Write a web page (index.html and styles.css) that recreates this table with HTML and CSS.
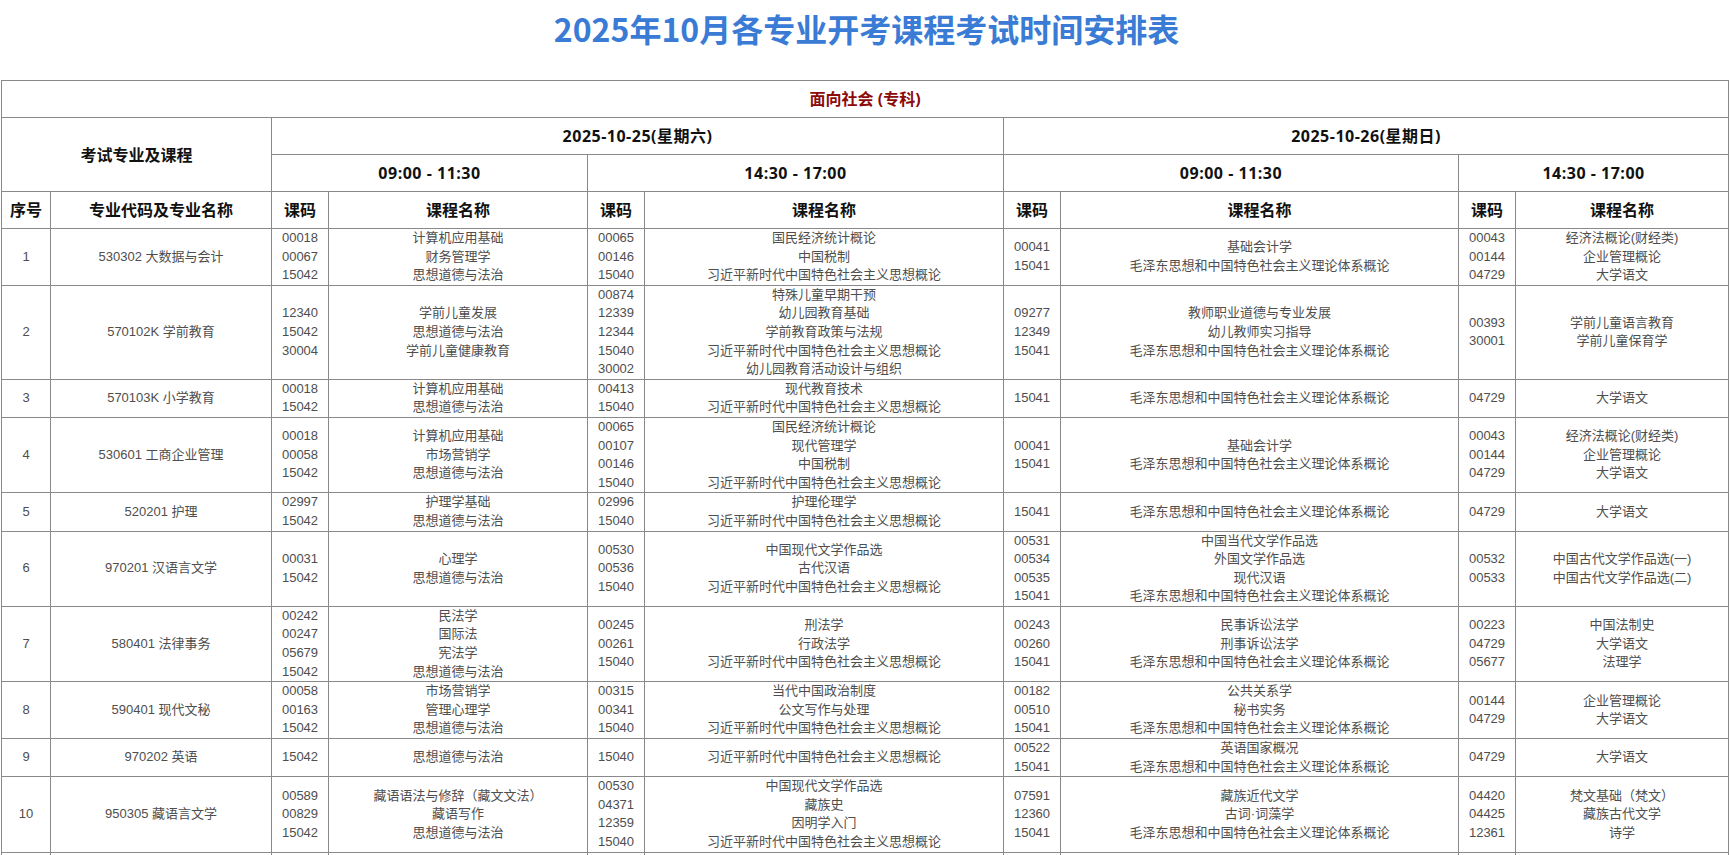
FILE: index.html
```html
<!DOCTYPE html>
<html lang="zh-CN">
<head>
<meta charset="utf-8">
<title>2025年10月各专业开考课程考试时间安排表</title>
<link rel="stylesheet" href="styles.css">
</head>
<body>
<h1 class="title">2025年10月各专业开考课程考试时间安排表</h1>
<table class="schedule">
  <colgroup>
    <col class="c-no"><col class="c-major">
    <col class="c-code"><col class="c-n1">
    <col class="c-code"><col class="c-n2">
    <col class="c-code"><col class="c-n3">
    <col class="c-code"><col class="c-n4">
  </colgroup>
  <thead>
    <tr><th colspan="10" class="section">面向社会 (专科)</th></tr>
    <tr>
      <th colspan="2" rowspan="2">考试专业及课程</th>
      <th colspan="4" class="latin">2025-10-25(星期六)</th>
      <th colspan="4" class="latin">2025-10-26(星期日)</th>
    </tr>
    <tr>
      <th colspan="2" class="latin">09:00 - 11:30</th>
      <th colspan="2" class="latin">14:30 - 17:00</th>
      <th colspan="2" class="latin">09:00 - 11:30</th>
      <th colspan="2" class="latin">14:30 - 17:00</th>
    </tr>
    <tr class="colhead">
      <th>序号</th><th>专业代码及专业名称</th>
      <th>课码</th><th>课程名称</th>
      <th>课码</th><th>课程名称</th>
      <th>课码</th><th>课程名称</th>
      <th>课码</th><th>课程名称</th>
    </tr>
  </thead>
  <tbody>
    <tr>
      <td>1</td><td>530302 大数据与会计</td>
      <td>00018<br>00067<br>15042</td><td>计算机应用基础<br>财务管理学<br>思想道德与法治</td>
      <td>00065<br>00146<br>15040</td><td>国民经济统计概论<br>中国税制<br>习近平新时代中国特色社会主义思想概论</td>
      <td>00041<br>15041</td><td>基础会计学<br>毛泽东思想和中国特色社会主义理论体系概论</td>
      <td>00043<br>00144<br>04729</td><td>经济法概论(财经类)<br>企业管理概论<br>大学语文</td>
    </tr>
    <tr>
      <td>2</td><td>570102K 学前教育</td>
      <td>12340<br>15042<br>30004</td><td>学前儿童发展<br>思想道德与法治<br>学前儿童健康教育</td>
      <td>00874<br>12339<br>12344<br>15040<br>30002</td><td>特殊儿童早期干预<br>幼儿园教育基础<br>学前教育政策与法规<br>习近平新时代中国特色社会主义思想概论<br>幼儿园教育活动设计与组织</td>
      <td>09277<br>12349<br>15041</td><td>教师职业道德与专业发展<br>幼儿教师实习指导<br>毛泽东思想和中国特色社会主义理论体系概论</td>
      <td>00393<br>30001</td><td>学前儿童语言教育<br>学前儿童保育学</td>
    </tr>
    <tr>
      <td>3</td><td>570103K 小学教育</td>
      <td>00018<br>15042</td><td>计算机应用基础<br>思想道德与法治</td>
      <td>00413<br>15040</td><td>现代教育技术<br>习近平新时代中国特色社会主义思想概论</td>
      <td>15041</td><td>毛泽东思想和中国特色社会主义理论体系概论</td>
      <td>04729</td><td>大学语文</td>
    </tr>
    <tr>
      <td>4</td><td>530601 工商企业管理</td>
      <td>00018<br>00058<br>15042</td><td>计算机应用基础<br>市场营销学<br>思想道德与法治</td>
      <td>00065<br>00107<br>00146<br>15040</td><td>国民经济统计概论<br>现代管理学<br>中国税制<br>习近平新时代中国特色社会主义思想概论</td>
      <td>00041<br>15041</td><td>基础会计学<br>毛泽东思想和中国特色社会主义理论体系概论</td>
      <td>00043<br>00144<br>04729</td><td>经济法概论(财经类)<br>企业管理概论<br>大学语文</td>
    </tr>
    <tr>
      <td>5</td><td>520201 护理</td>
      <td>02997<br>15042</td><td>护理学基础<br>思想道德与法治</td>
      <td>02996<br>15040</td><td>护理伦理学<br>习近平新时代中国特色社会主义思想概论</td>
      <td>15041</td><td>毛泽东思想和中国特色社会主义理论体系概论</td>
      <td>04729</td><td>大学语文</td>
    </tr>
    <tr>
      <td>6</td><td>970201 汉语言文学</td>
      <td>00031<br>15042</td><td>心理学<br>思想道德与法治</td>
      <td>00530<br>00536<br>15040</td><td>中国现代文学作品选<br>古代汉语<br>习近平新时代中国特色社会主义思想概论</td>
      <td>00531<br>00534<br>00535<br>15041</td><td>中国当代文学作品选<br>外国文学作品选<br>现代汉语<br>毛泽东思想和中国特色社会主义理论体系概论</td>
      <td>00532<br>00533</td><td>中国古代文学作品选(一)<br>中国古代文学作品选(二)</td>
    </tr>
    <tr>
      <td>7</td><td>580401 法律事务</td>
      <td>00242<br>00247<br>05679<br>15042</td><td>民法学<br>国际法<br>宪法学<br>思想道德与法治</td>
      <td>00245<br>00261<br>15040</td><td>刑法学<br>行政法学<br>习近平新时代中国特色社会主义思想概论</td>
      <td>00243<br>00260<br>15041</td><td>民事诉讼法学<br>刑事诉讼法学<br>毛泽东思想和中国特色社会主义理论体系概论</td>
      <td>00223<br>04729<br>05677</td><td>中国法制史<br>大学语文<br>法理学</td>
    </tr>
    <tr>
      <td>8</td><td>590401 现代文秘</td>
      <td>00058<br>00163<br>15042</td><td>市场营销学<br>管理心理学<br>思想道德与法治</td>
      <td>00315<br>00341<br>15040</td><td>当代中国政治制度<br>公文写作与处理<br>习近平新时代中国特色社会主义思想概论</td>
      <td>00182<br>00510<br>15041</td><td>公共关系学<br>秘书实务<br>毛泽东思想和中国特色社会主义理论体系概论</td>
      <td>00144<br>04729</td><td>企业管理概论<br>大学语文</td>
    </tr>
    <tr>
      <td>9</td><td>970202 英语</td>
      <td>15042</td><td>思想道德与法治</td>
      <td>15040</td><td>习近平新时代中国特色社会主义思想概论</td>
      <td>00522<br>15041</td><td>英语国家概况<br>毛泽东思想和中国特色社会主义理论体系概论</td>
      <td>04729</td><td>大学语文</td>
    </tr>
    <tr>
      <td>10</td><td>950305 藏语言文学</td>
      <td>00589<br>00829<br>15042</td><td>藏语语法与修辞（藏文文法）<br>藏语写作<br>思想道德与法治</td>
      <td>00530<br>04371<br>12359<br>15040</td><td>中国现代文学作品选<br>藏族史<br>因明学入门<br>习近平新时代中国特色社会主义思想概论</td>
      <td>07591<br>12360<br>15041</td><td>藏族近代文学<br>古词·词藻学<br>毛泽东思想和中国特色社会主义理论体系概论</td>
      <td>04420<br>04425<br>12361</td><td>梵文基础（梵文）<br>藏族古代文学<br>诗学</td>
    </tr>
    <tr>
      <td>11</td><td>530701 电子商务</td>
      <td>00018<br>15042</td><td>计算机应用基础<br>思想道德与法治</td>
      <td>15040</td><td>习近平新时代中国特色社会主义思想概论</td>
      <td>00182<br>15041</td><td>公共关系学<br>毛泽东思想和中国特色社会主义理论体系概论</td>
      <td>04729</td><td>大学语文</td>
    </tr>
  </tbody>
</table>
</body>
</html>
```
FILE: styles.css
```css
html, body {
  margin: 0;
  padding: 0;
  background: #ffffff;
}

body {
  font-family: "Liberation Sans", "Noto Sans CJK SC", sans-serif;
}

.title {
  margin: 0 0 29px 0;
  padding-top: 5px;
  height: 46px;
  line-height: 46px;
  text-align: center;
  font-family: "Noto Sans CJK SC", sans-serif;
  font-size: 32px;
  font-weight: bold;
  color: #3a7bd5;
}

.schedule {
  border-collapse: collapse;
  table-layout: fixed;
  width: 1727px;
  margin-left: 1px;
}

.c-no { width: 49px; }
.c-major { width: 221px; }
.c-code { width: 57px; }
.c-n1 { width: 259px; }
.c-n2 { width: 359px; }
.c-n3 { width: 398px; }
.c-n4 { width: 213px; }

.schedule th,
.schedule td {
  border: 1px solid #898989;
  padding: 0;
  text-align: center;
  vertical-align: middle;
}

.schedule th {
  height: 36px;
  font-family: "Open Sans", "Noto Sans CJK SC", sans-serif;
  font-size: 16px;
  font-weight: bold;
  color: #111111;
  line-height: 20px;
}

.schedule th.latin {
  letter-spacing: 0.5px;
}

.schedule th.section {
  color: #8b0a0a;
}

.schedule td {
  font-size: 13px;
  line-height: 18.6px;
  color: #4e4e4e;
}
```
